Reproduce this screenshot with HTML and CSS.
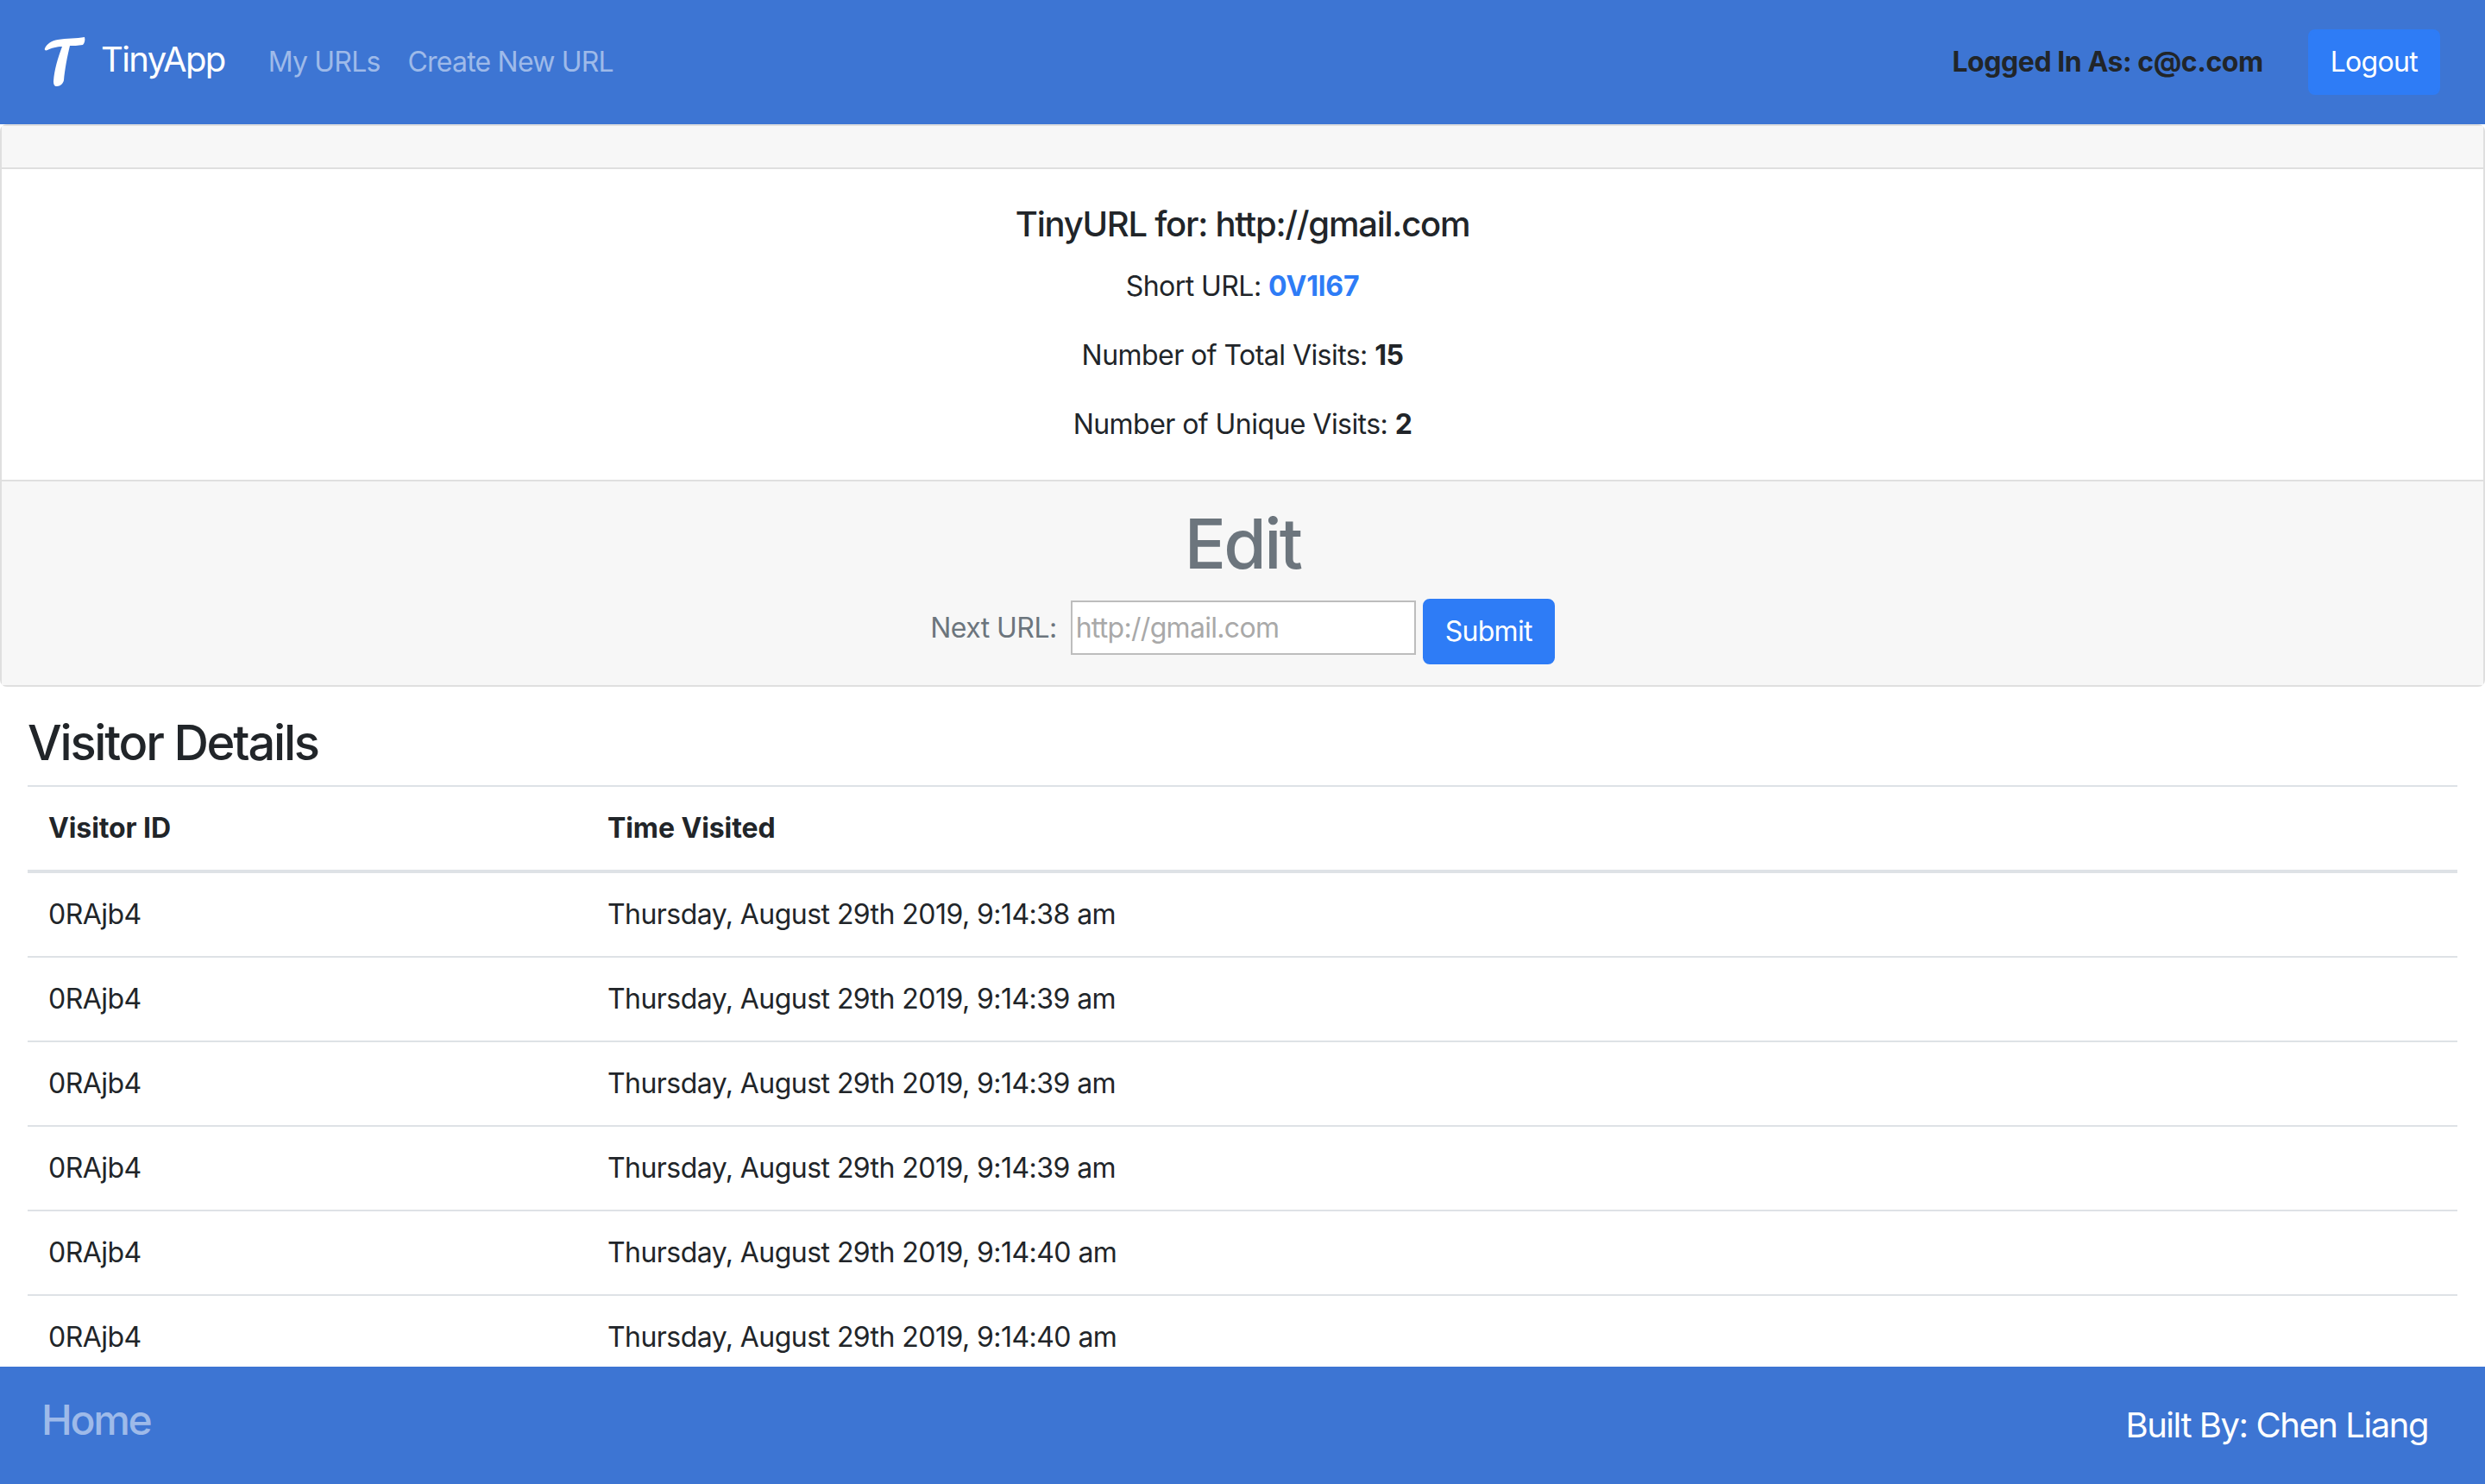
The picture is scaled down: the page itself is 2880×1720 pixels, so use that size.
FILE: index.html
```html
<!DOCTYPE html>
<html lang="en">
<head>
  <meta charset="UTF-8" />
  <title>TinyApp</title>
  <link rel="stylesheet" href="styles.css">
</head>
<body>

  <nav class="navbar">
    <a class="brand" href="#">
      <svg class="brand-logo" viewBox="0 0 48 58" aria-hidden="true">
        <path d="M1 13 C3 8 9 4 16 3 C26 1 38 2 47 0 C48 3 47 7 45 9 C39 10 34 10 30 10 C27 22 24 38 23 50 C22 54 19 57 15 57 C12 57 11 55 11 51 C12 38 16 24 21 11 C15 11 8 13 4 15 C2 16 0 15 1 13 Z"/>
      </svg>
      <span class="brand-name">TinyApp</span>
    </a>
    <ul class="nav-links">
      <li><a href="#">My URLs</a></li>
      <li><a href="#">Create New URL</a></li>
    </ul>
    <span class="logged-in">Logged In As: c@c.com</span>
    <button class="btn logout">Logout</button>
  </nav>

  <main class="content">
    <section class="card">
      <div class="card-header"></div>
      <div class="card-body">
        <h5>TinyURL for: http://gmail.com</h5>
        <p>Short URL: <a class="short-link" href="#">0V1l67</a></p>
        <p>Number of Total Visits: <b>15</b></p>
        <p class="last">Number of Unique Visits: <b>2</b></p>
      </div>
      <div class="card-footer">
        <h1>Edit</h1>
        <form class="edit-form">
          <label for="nextUrl">Next URL:</label>
          <input type="text" id="nextUrl" placeholder="http://gmail.com" />
          <button class="btn" type="button">Submit</button>
        </form>
      </div>
    </section>

    <section class="visitors">
      <h3>Visitor Details</h3>
      <table>
        <thead>
          <tr>
            <th class="col-id">Visitor ID</th>
            <th>Time Visited</th>
          </tr>
        </thead>
        <tbody>
          <tr><td>0RAjb4</td><td>Thursday, August 29th 2019, 9:14:38 am</td></tr>
          <tr><td>0RAjb4</td><td>Thursday, August 29th 2019, 9:14:39 am</td></tr>
          <tr><td>0RAjb4</td><td>Thursday, August 29th 2019, 9:14:39 am</td></tr>
          <tr><td>0RAjb4</td><td>Thursday, August 29th 2019, 9:14:39 am</td></tr>
          <tr><td>0RAjb4</td><td>Thursday, August 29th 2019, 9:14:40 am</td></tr>
          <tr><td>0RAjb4</td><td>Thursday, August 29th 2019, 9:14:40 am</td></tr>
        </tbody>
      </table>
    </section>
  </main>

  <footer class="footer">
    <a class="home" href="#">Home</a>
    <span class="built-by">Built By: Chen Liang</span>
  </footer>

</body>
</html>
```

FILE: styles.css
```css
* {
  box-sizing: border-box;
}

html, body {
  height: 100%;
}

body {
  margin: 0;
  display: flex;
  flex-direction: column;
  overflow: hidden;
  font-family: Inter, 'Liberation Sans', sans-serif;
  font-size: 32px;
  line-height: 1.5;
  letter-spacing: -0.55px;
  color: #212529;
  background: #FFFFFF;
}

a {
  text-decoration: none;
}

/* Top bar */
.navbar {
  flex: none;
  height: 144px;
  padding: 0 52px 0 51px;
  display: flex;
  align-items: center;
  background: #3D75D3;
}

.brand {
  display: flex;
  align-items: center;
  gap: 18px;
  color: #FFFFFF;
  font-size: 40px;
  letter-spacing: -1.6px;
}

.brand-logo {
  width: 48px;
  height: 58px;
  fill: #FFFFFF;
}

.brand-name {
  position: relative;
  top: -3px;
}

.nav-links {
  list-style: none;
  margin: 0 0 0 50px;
  padding: 0;
  display: flex;
  gap: 32px;
}

.nav-links a {
  color: #9EBAE9;
  letter-spacing: -0.8px;
}

.logged-in {
  margin-left: auto;
  margin-right: 52px;
  font-weight: 700;
  letter-spacing: -0.45px;
}

.btn {
  padding: 12px 24px;
  border: 2px solid #2E7CF6;
  border-radius: 8px;
  background: #2E7CF6;
  color: #FFFFFF;
  font-family: inherit;
  font-size: 32px;
  line-height: 48px;
  letter-spacing: -0.7px;
}

/* URL card */
.content {
  flex: 1;
  min-height: 0;
  overflow: hidden;
}

.card {
  border: 2px solid #DFDFDF;
  border-radius: 8px;
  background: #FFFFFF;
}

.card-header {
  height: 50px;
  border-bottom: 2px solid #DFDFDF;
  background: #F7F7F7;
}

.card-body {
  padding: 40px;
  text-align: center;
}

h5 {
  margin: 0 0 24px;
  font-size: 40px;
  font-weight: 550;
  line-height: 1.2;
  letter-spacing: -1.25px;
}

p {
  margin: 0 0 32px;
}

p.last {
  margin-bottom: 0;
}

.short-link {
  color: #2E7CF6;
  font-weight: 700;
  letter-spacing: -0.2px;
}

.card-footer {
  padding: 24px 40px;
  border-top: 2px solid #DFDFDF;
  background: #F7F7F7;
  color: #6C757D;
  text-align: center;
}

h1 {
  margin: 0 0 16px;
  font-size: 80px;
  font-weight: 550;
  line-height: 1.2;
  letter-spacing: -2.6px;
}

.edit-form {
  display: flex;
  justify-content: center;
  align-items: flex-start;
  gap: 8px;
}

.edit-form label {
  margin-right: 8px;
  line-height: 67px;
}

.edit-form input {
  width: 400px;
  height: 63px;
  margin-top: 2px;
  padding: 2px 4px;
  border: 2px solid #BDBDBD;
  background: #FFFFFF;
  font-family: inherit;
  font-size: 32px;
  letter-spacing: -0.7px;
  outline: none;
}

.edit-form input::placeholder {
  color: #A9A9A9;
  opacity: 1;
}

/* Visitor table */
.visitors {
  padding: 32px 32px 0;
}

h3 {
  margin: 0 0 15px;
  font-size: 56px;
  font-weight: 550;
  line-height: 67px;
  letter-spacing: -2.2px;
}

table {
  width: 100%;
  border-collapse: collapse;
}

th, td {
  padding: 24px;
  border-top: 2px solid #DEE2E6;
  text-align: left;
}

th {
  border-bottom: 4px solid #DEE2E6;
  font-weight: 700;
  letter-spacing: -0.1px;
}

.col-id {
  width: 648px;
}

/* Bottom bar */
.footer {
  flex: none;
  height: 136px;
  padding: 0 66px 0 48px;
  display: flex;
  justify-content: space-between;
  align-items: center;
  background: #3D75D3;
}

.home {
  position: relative;
  top: -6px;
  color: #9EBAE9;
  font-size: 48px;
  font-weight: 550;
  letter-spacing: -2.3px;
}

.built-by {
  color: #FFFFFF;
  font-size: 40px;
  letter-spacing: -1.45px;
}
```
